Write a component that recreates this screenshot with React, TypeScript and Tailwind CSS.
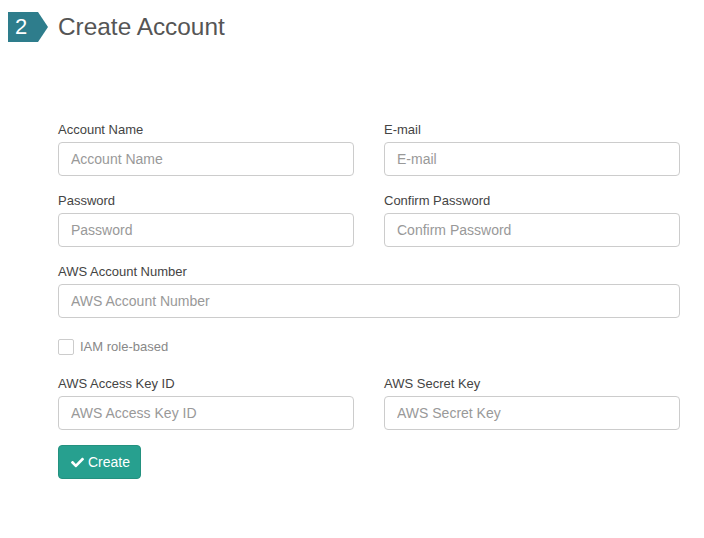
import React from "react";
import { FaCheck } from "react-icons/fa";

const font = { fontFamily: '"Liberation Sans", Arial, sans-serif' };

function Field({ label, className = "" }: { label: string; className?: string }) {
  return (
    <div className={className}>
      <div className="text-[13px] leading-[19px] pt-[1px] text-[#444] mb-[3px]">{label}</div>
      <input
        placeholder={label}
        className="block w-full h-[34px] rounded-[4px] border border-[#ccc] px-[12px] text-[14px] text-[#555] placeholder:text-[#999] outline-none bg-white"
      />
    </div>
  );
}

export default function App() {
  return (
    <div className="w-[704px] h-[538px] bg-white" style={font}>
      <div className="flex items-center pt-[12px] pl-[8px]">
        <div className="w-[40px] h-[30px] bg-[#2e7d8c] text-white text-[22px] leading-[30px] pl-[7px] [clip-path:polygon(0_0,75%_0,100%_50%,75%_100%,0_100%)]">
          2
        </div>
        <div className="ml-[10px] text-[24.4px] leading-[30px] text-[#555]">Create Account</div>
      </div>
      <div className="ml-[58px] mt-[77px] w-[622px]">
        <div className="grid grid-cols-2 gap-x-[30px] gap-y-[14px]">
          <Field label="Account Name" />
          <Field label="E-mail" />
          <Field label="Password" />
          <Field label="Confirm Password" />
          <Field label="AWS Account Number" className="col-span-2" />
        </div>
        <label className="flex items-center mt-[21px] h-[16px]">
          <span className="w-[16px] h-[16px] border border-[#ccc] rounded-[2px] bg-white" />
          <span className="ml-[6px] text-[13px] text-[#888]">IAM role-based</span>
        </label>
        <div className="grid grid-cols-2 gap-x-[30px] mt-[18px]">
          <Field label="AWS Access Key ID" />
          <Field label="AWS Secret Key" />
        </div>
        <button className="mt-[15px] flex items-center h-[34px] w-[83px] rounded-[4px] bg-[#27a08f] border border-[#23917f] text-white text-[14px] pl-[12px]">
          <FaCheck className="w-[13px] h-[13px] mr-[4px]" />
          Create
        </button>
      </div>
    </div>
  );
}
